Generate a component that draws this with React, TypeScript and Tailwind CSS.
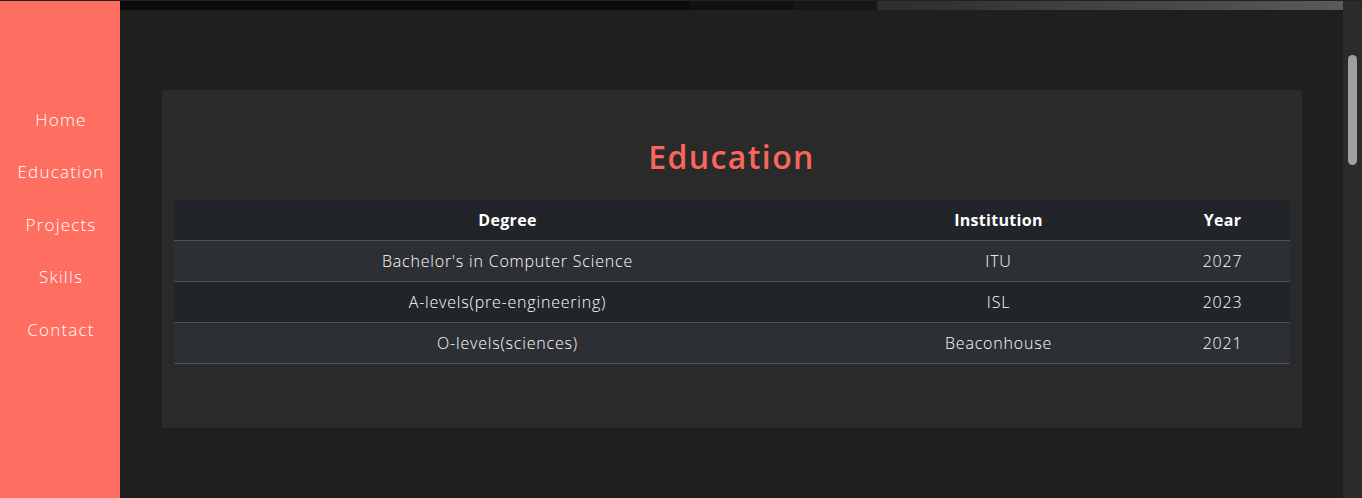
import React from 'react';

const links = ['Home', 'Education', 'Projects', 'Skills', 'Contact'];

const rows = [
  { degree: "Bachelor's in Computer Science", institution: 'ITU', year: '2027' },
  { degree: 'A-levels(pre-engineering)', institution: 'ISL', year: '2023' },
  { degree: 'O-levels(sciences)', institution: 'Beaconhouse', year: '2021' },
];

export default function App() {
  return (
    <div className="relative flex h-[498px] w-full overflow-hidden bg-[#1f1f1f] font-['Open_Sans',sans-serif]">
      {/* thin top edge */}
      <div className="absolute left-0 right-0 top-0 h-px bg-[#1e2126]" />

      {/* Sidebar */}
      <nav className="flex w-[120px] shrink-0 flex-col bg-[#ff6f61] pl-[2px] pt-[93px]">
        {links.map((l) => (
          <a
            key={l}
            href="#"
            className="flex h-[52.5px] items-center justify-center text-[17px] font-light tracking-[1.2px] text-white"
          >
            {l}
          </a>
        ))}
      </nav>

      {/* Main */}
      <main className="flex min-w-0 flex-1 flex-col">
        <div className="h-[10px] w-full bg-[linear-gradient(90deg,#0b0b0b_0%,#0b0b0b_46.5%,#111111_46.6%,#111111_55%,#161616_55.1%,#161616_61.8%,#2e2e2e_62%,#333333_68%,#404040_77%,#4a4a4a_88%,#5a5a5a_100%)]" />

        <section className="mx-auto mt-[80px] w-[1140px] bg-[#2a2a2a] px-3 pb-12 pt-12">
          <h2 className="mb-6 text-center text-[32px] font-semibold leading-[38px] tracking-[1.4px] text-[#f9665b]">
            Education
          </h2>
          <table className="mb-4 w-full border-collapse text-center text-[16px] text-white">
            <thead>
              <tr className="bg-[#212529]">
                <th className="h-[40px] w-[668px] border-b border-[#4d5154] font-bold tracking-[0.3px]">Degree</th>
                <th className="h-[40px] w-[314px] border-b border-[#4d5154] font-bold tracking-[0.3px]">Institution</th>
                <th className="h-[40px] border-b border-[#4d5154] font-bold tracking-[0.3px]">Year</th>
              </tr>
            </thead>
            <tbody>
              {rows.map((r, i) => (
                <tr key={r.degree} className={i % 2 === 0 ? 'bg-[#2c3034]' : 'bg-[#212529]'}>
                  <td className="h-[41px] border-b border-[#4d5154] font-light tracking-[0.8px]">{r.degree}</td>
                  <td className="h-[41px] border-b border-[#4d5154] font-light tracking-[0.8px]">{r.institution}</td>
                  <td className="h-[41px] border-b border-[#4d5154] font-light tracking-[0.8px]">{r.year}</td>
                </tr>
              ))}
            </tbody>
          </table>
        </section>
      </main>

      {/* Scrollbar */}
      <div className="flex w-[19px] shrink-0 justify-center bg-[#2b2b2b] pt-[55px]">
        <div className="h-[110px] w-[9px] rounded-full bg-[#9f9f9f]" />
      </div>
    </div>
  );
}
